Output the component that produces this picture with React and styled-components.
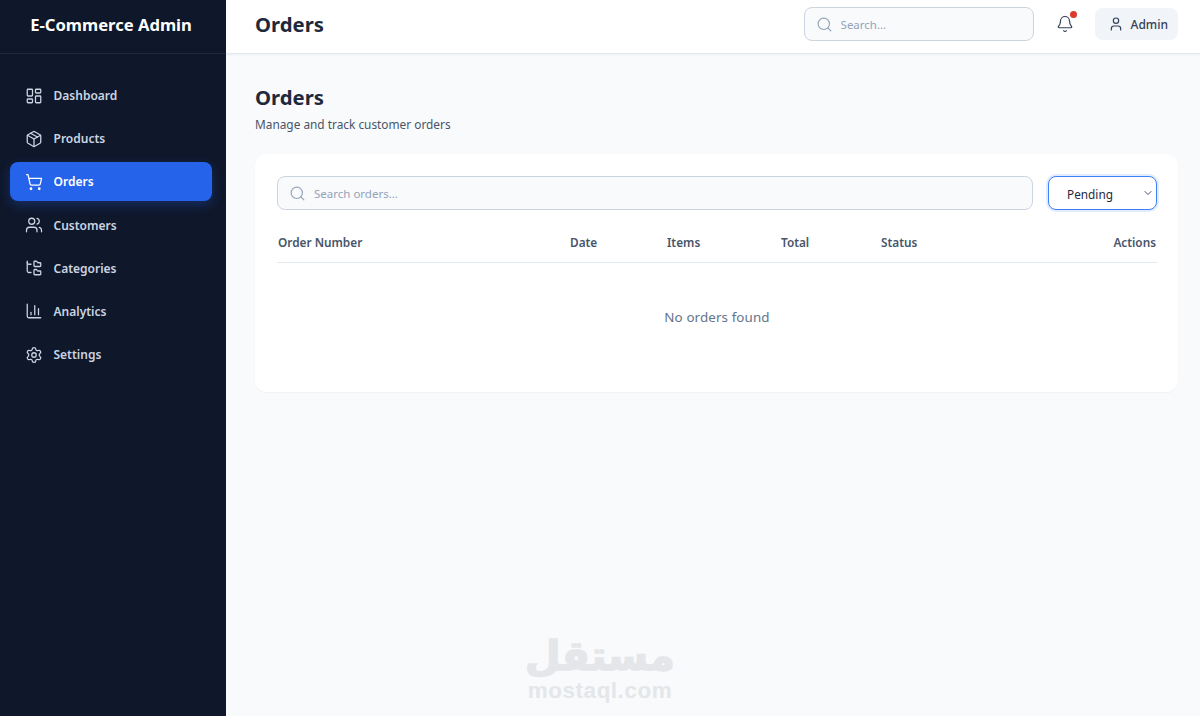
import React from "react";
import styled, { createGlobalStyle } from "styled-components";
import { LayoutDashboard, Package, ShoppingCart, Users, FolderTree, ChartColumn, Settings, Search, Bell, User, ChevronDown } from "lucide-react";

const Global = createGlobalStyle`
  html, body { margin: 0; padding: 0; height: 100%; }
  body { font-family: "Noto Sans", Inter, sans-serif; background: #f8fafc; overflow: hidden; }
  * { box-sizing: border-box; }
`;

const Shell = styled.div`display: flex; width: 1200px; height: 716px; position: relative;`;
const Sidebar = styled.aside`width: 226px; flex: none; background: #0f172a; color: #fff;`;
const Brand = styled.div`
  height: 54px; display: flex; align-items: center; justify-content: center;
  border-bottom: 1px solid #1e293b; font-size: 16.6px; font-weight: 700; padding-bottom: 5px; padding-right: 4px;
`;
const Nav = styled.nav`display: flex; flex-direction: column; gap: 4.2px; padding: 22px 14px 0 10px;`;
const NavItem = styled.a`
  display: flex; align-items: center; gap: 10.5px; height: 39px; padding: 0 15px; border-radius: 8px;
  font-size: 12px; font-weight: 600;
  color: ${p => (p.$active ? "#ffffff" : "#cbd5e1")};
  background: ${p => (p.$active ? "#2563eb" : "transparent")};
  box-shadow: ${p => (p.$active ? "0 4px 12px rgba(37,99,235,.3)" : "none")};
  svg { flex: none; }
`;
const Main = styled.div`flex: 1; display: flex; flex-direction: column; min-width: 0;`;
const Header = styled.header`
  height: 54px; flex: none; background: #fff; border-bottom: 1px solid #e2e8f0;
  display: flex; align-items: center; padding: 0 22px 5px 29px;
  box-shadow: 0 1px 2px rgba(15,23,42,.05);
`;
const HeaderTitle = styled.h2`margin: 0; font-size: 20.3px; font-weight: 700; color: #1e293b; flex: 1;`;
const FieldWrap = styled.label`
  display: flex; align-items: center; gap: 8px; height: 34px; padding: 0 11px;
  width: ${p => p.$width || "auto"}; flex: ${p => p.$grow ? 1 : "none"};
  background: #f8fafc; border: 1px solid #cbd5e1; border-radius: 8px;
  color: #94a3b8; font-size: 11.5px;
`;
const Input = styled.input`
  border: 0; background: transparent; outline: 0; flex: 1; min-width: 0; padding: 0;
  font: inherit; color: #334155;
  &::placeholder { color: #94a3b8; opacity: 1; }
`;
const BellButton = styled.button`
  position: relative; border: 0; background: transparent; padding: 0; width: 18px; height: 18px;
  margin: 0 21px 0 22px; color: #334155; display: flex;
`;
const Dot = styled.span`
  position: absolute; top: -4px; right: -3px; width: 7px; height: 7px; border-radius: 50%; background: #dc3a2c;
`;
const UserButton = styled.button`
  display: flex; align-items: center; gap: 7px; height: 32px; padding: 0 10px 0 13px;
  border: 0; border-radius: 8px; background: #f1f5f9; color: #334155;
  font: 500 12px "Noto Sans", sans-serif;
`;
const Content = styled.main`padding: 28px 22px 0 29px; flex: 1;`;
const PageTitle = styled.h1`margin: 0; font-size: 20.3px; line-height: 30px; font-weight: 700; color: #1e293b;`;
const PageSub = styled.p`margin: 4px 0 0; font-size: 11.85px; line-height: 16px; color: #475569;`;
const Card = styled.section`
  margin-top: 22px; background: #fff; border-radius: 12px; padding: 22px 21px 0 22px; height: 238px;
  box-shadow: 0 1px 2px rgba(15,23,42,.04);
`;
const Toolbar = styled.div`display: flex; gap: 15px; align-items: center;`;
const SelectWrap = styled.div`position: relative; flex: none; width: 109px; height: 34px; color: #475569;
  svg { position: absolute; right: 3px; top: 11px; pointer-events: none; }
`;
const Select = styled.select`
  appearance: none; width: 100%; height: 100%; padding: 1px 0 0 18px; background: #fff;
  border: 1px solid #3b82f6; border-radius: 8px; outline: 0;
  box-shadow: 0 0 0 2px rgba(59,130,246,.15);
  font: 400 11.8px "Noto Sans", sans-serif; color: #1e293b;
`;
const Table = styled.table`width: 100%; border-collapse: collapse; table-layout: fixed; margin-top: 15px;`;
const Th = styled.th`
  width: ${p => p.$width || "auto"}; height: 37px; padding: 0 1px 3px; border-bottom: 1px solid #e2e8f0;
  text-align: ${p => p.$align || "left"}; font-size: 11.8px; font-weight: 600; color: #475569;
`;
const Empty = styled.td`
  height: 110px; padding: 0; text-align: center; font-size: 13.4px; letter-spacing: .1px; color: #64748b;
`;
const Watermark = styled.div`
  position: absolute; left: 516px; top: 632px; width: 168px; display: flex; flex-direction: column; align-items: center;
  color: #e4e6e9; pointer-events: none;
`;
const WatermarkArabic = styled.div`font: 700 41px/48px "DejaVu Sans", sans-serif; -webkit-text-stroke: 1.5px #e4e6e9;`;
const WatermarkLatin = styled.div`font: 700 22.5px/21px "Liberation Sans", sans-serif; letter-spacing: .5px;`;

const items = [
  ["Dashboard", LayoutDashboard],
  ["Products", Package],
  ["Orders", ShoppingCart],
  ["Customers", Users],
  ["Categories", FolderTree],
  ["Analytics", ChartColumn],
  ["Settings", Settings],
];

export default function App() {
  return (
    <Shell>
      <Global />
      <Sidebar>
        <Brand>E-Commerce Admin</Brand>
        <Nav>
          {items.map(([label, Icon]) => (
            <NavItem key={label} $active={label === "Orders"}>
              <Icon size={18} strokeWidth={1.7} />
              {label}
            </NavItem>
          ))}
        </Nav>
      </Sidebar>
      <Main>
        <Header>
          <HeaderTitle>Orders</HeaderTitle>
          <FieldWrap $width="230px">
            <Search size={17} strokeWidth={1.6} />
            <Input placeholder="Search..." />
          </FieldWrap>
          <BellButton>
            <Bell size={18} strokeWidth={1.6} />
            <Dot />
          </BellButton>
          <UserButton>
            <User size={16} strokeWidth={1.8} />
            Admin
          </UserButton>
        </Header>
        <Content>
          <PageTitle>Orders</PageTitle>
          <PageSub>Manage and track customer orders</PageSub>
          <Card>
            <Toolbar>
              <FieldWrap $grow>
                <Search size={17} strokeWidth={1.6} />
                <Input placeholder="Search orders..." />
              </FieldWrap>
              <SelectWrap>
                <Select defaultValue="Pending">
                  <option>All</option>
                  <option>Pending</option>
                  <option>Shipped</option>
                </Select>
                <ChevronDown size={12} strokeWidth={2} />
              </SelectWrap>
            </Toolbar>
            <Table>
              <thead>
                <tr>
                  <Th $width="292px">Order Number</Th>
                  <Th $width="97px">Date</Th>
                  <Th $width="114px">Items</Th>
                  <Th $width="100px">Total</Th>
                  <Th>Status</Th>
                  <Th $align="right">Actions</Th>
                </tr>
              </thead>
              <tbody>
                <tr><Empty colSpan={6}>No orders found</Empty></tr>
              </tbody>
            </Table>
          </Card>
        </Content>
      </Main>
      <Watermark>
        <WatermarkArabic dir="rtl">مستقل</WatermarkArabic>
        <WatermarkLatin>mostaql.com</WatermarkLatin>
      </Watermark>
    </Shell>
  );
}
